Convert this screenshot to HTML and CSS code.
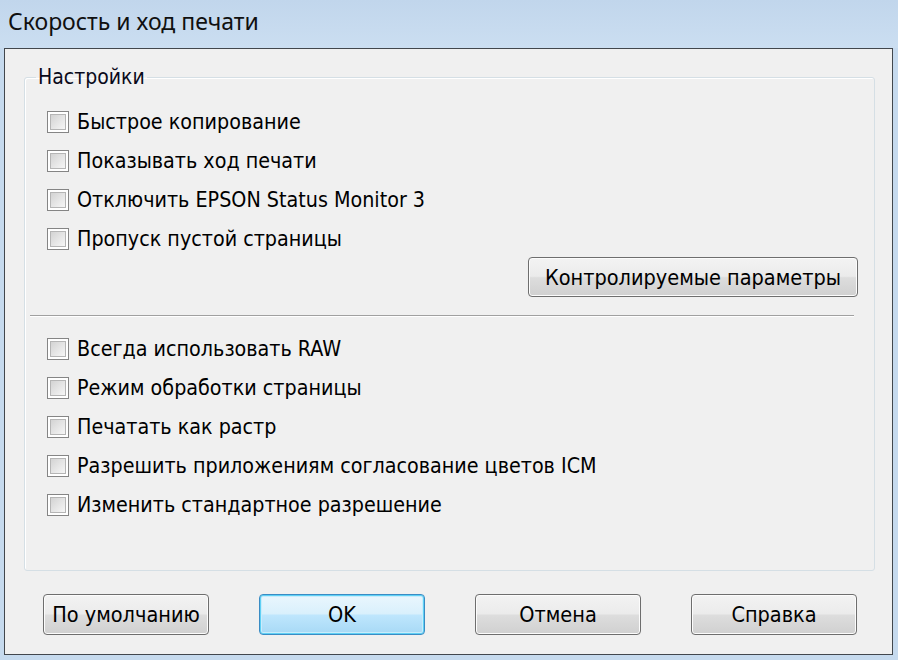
FILE: index.html
```html
<!DOCTYPE html>
<html lang="ru">
<head>
<meta charset="utf-8">
<title>Скорость и ход печати</title>
<link rel="stylesheet" href="styles.css">
</head>
<body>
<div class="window">
  <div class="titlebar">Скорость и ход печати</div>
  <div class="client">
    <fieldset class="group">
      <legend>Настройки</legend>
      <div class="checks">
        <label class="check"><span class="box"></span>Быстрое копирование</label>
        <label class="check"><span class="box"></span>Показывать ход печати</label>
        <label class="check"><span class="box"></span>Отключить EPSON Status Monitor 3</label>
        <label class="check"><span class="box"></span>Пропуск пустой страницы</label>
      </div>
      <div class="btnrow"><button class="btn wide">Контролируемые параметры</button></div>
      <hr class="sep">
      <div class="checks second">
        <label class="check"><span class="box"></span>Всегда использовать RAW</label>
        <label class="check"><span class="box"></span>Режим обработки страницы</label>
        <label class="check"><span class="box"></span>Печатать как растр</label>
        <label class="check"><span class="box"></span>Разрешить приложениям согласование цветов ICM</label>
        <label class="check"><span class="box"></span>Изменить стандартное разрешение</label>
      </div>
    </fieldset>
    <div class="footer">
      <button class="btn">По умолчанию</button>
      <button class="btn default">OK</button>
      <button class="btn">Отмена</button>
      <button class="btn">Справка</button>
    </div>
  </div>
</div>
</body>
</html>
```
FILE: styles.css
```css
html, body {
  margin: 0;
  padding: 0;
}
body {
  width: 898px;
  height: 660px;
  overflow: hidden;
  background: #c6daee;
  font-family: "DejaVu Sans Condensed", "DejaVu Sans", sans-serif;
  font-stretch: condensed;
  color: #000;
}
.window {
  height: 660px;
  display: flex;
  flex-direction: column;
}
.titlebar {
  height: 48px;
  box-sizing: border-box;
  padding: 0 0 6px 8px;
  display: flex;
  align-items: center;
  font-family: "Noto Sans", sans-serif;
  font-stretch: normal;
  font-size: 23px;
  color: #101010;
  background: linear-gradient(#c1d6ec, #cbdef1);
}
.client {
  flex: 1;
  margin: 0 5px 5px 4px;
  border: 1px solid #42474d;
  background: #f0f0f0;
  display: flex;
  flex-direction: column;
}
.group {
  margin: 16px 17px 0 19px;
  padding: 13px 16px 46px 11px;
  border: 1px solid #d5dfe5;
  border-radius: 3px;
  box-shadow: inset 1px 1px 0 #fff;
  min-width: 0;
}
.group legend {
  padding: 0 2px;
  font-size: 21px;
  line-height: 24px;
  color: #0a0a1a;
}
.checks {
  margin-left: 11px;
  display: flex;
  flex-direction: column;
}
.second {
  margin-top: 12px;
}
.check {
  height: 39px;
  display: flex;
  align-items: center;
  gap: 8px;
  font-size: 21.3px;
}
.box {
  width: 20px;
  height: 20px;
  border: 1px solid #858585;
  background: #fff;
  box-sizing: content-box;
  flex: none;
  display: flex;
  align-items: center;
  justify-content: center;
}
.box::before {
  content: "";
  width: 14px;
  height: 14px;
  border: 1px solid #b5b5b5;
  background: linear-gradient(135deg, #d3d3d3, #f6f6f6);
}
.btnrow {
  display: flex;
  justify-content: flex-end;
  margin-top: -1px;
}
.btn {
  height: 41px;
  width: 166px;
  padding: 0;
  border: 1px solid #6e6e6e;
  border-radius: 4px;
  background: linear-gradient(#f3f3f3 0%, #ebebeb 48%, #dddddd 52%, #d0d0d0 100%);
  box-shadow: inset 0 0 0 1px #fcfcfc;
  font-family: inherit;
  font-stretch: condensed;
  font-size: 21.5px;
  color: #000;
}
.btn.wide {
  width: 330px;
  height: 40px;
}
.btn.default {
  border-color: #3a8cc4;
  background: linear-gradient(#eaf6fd 0%, #d9f0fc 48%, #bee6fd 52%, #a7d9f5 100%);
  box-shadow: inset 0 0 0 1px #5fd0f5, inset 0 0 0 2px #c9ecfb;
}
.sep {
  margin: 18px 4px 0 -6px;
  height: 0;
  border: 0;
  border-top: 1px solid #a0a0a0;
  border-bottom: 1px solid #fff;
}
.footer {
  margin-top: 23px;
  padding-left: 38px;
  display: flex;
  gap: 50px;
}
```
